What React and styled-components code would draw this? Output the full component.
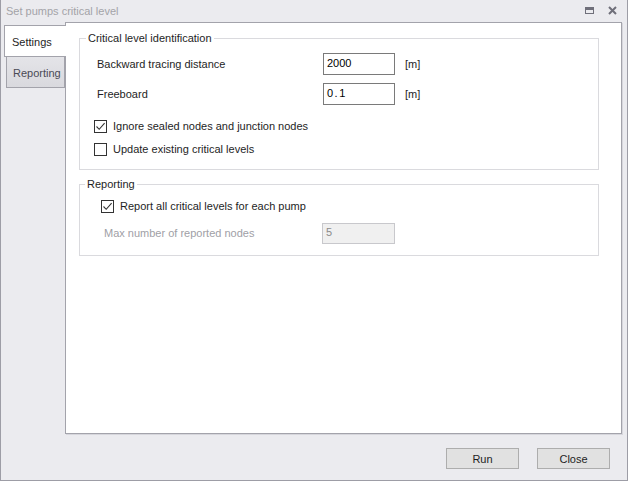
import styled, { createGlobalStyle } from "styled-components";

const GlobalStyle = createGlobalStyle`
    html, body {
        margin: 0;
        padding: 0;
    }
    body {
        font-family: "Liberation Sans", Arial, sans-serif;
        font-size: 11px;
        color: #1e1e1e;
    }
`;

const CheckMark = () => (
    <svg width="11" height="11" viewBox="0 0 11 11">
        <path d="M1.5 5.5 L4.2 8.3 L9.6 2.2" fill="none" stroke="#333" strokeWidth="1.1" />
    </svg>
);

const Checkbox = ({ checked, children }) => (
    <CheckRow>
        <Box>{checked && <CheckMark />}</Box>
        <span>{children}</span>
    </CheckRow>
);

const App = () => {
    return (
        <>
            <GlobalStyle />
            <Window>
                <TitleBar>
                    <span className="title">Set pumps critical level</span>
                    <div className="controls">
                        <MaxIcon />
                        <svg width="9" height="9" viewBox="0 0 9 9">
                            <path d="M1 1 L8 8 M8 1 L1 8" stroke="#6f6f7a" strokeWidth="2" />
                        </svg>
                    </div>
                </TitleBar>
                <Body>
                    <TabStrip>
                        <Tab $active>Settings</Tab>
                        <Tab>Reporting</Tab>
                    </TabStrip>
                    <Panel>
                        <Group>
                            <legend>Critical level identification</legend>
                            <GroupBody $pad="8px 0 12px 17px">
                                <FieldRow $label="216px">
                                    <span>Backward tracing distance</span>
                                    <Input>2000</Input>
                                    <span>[m]</span>
                                </FieldRow>
                                <FieldRow $label="216px">
                                    <span>Freeboard</span>
                                    <Input $spaced>0.1</Input>
                                    <span>[m]</span>
                                </FieldRow>
                                <CheckList $top="13px" $left="-3px">
                                    <Checkbox checked>Ignore sealed nodes and junction nodes</Checkbox>
                                    <Checkbox>Update existing critical levels</Checkbox>
                                </CheckList>
                            </GroupBody>
                        </Group>
                        <Group $second>
                            <legend>Reporting</legend>
                            <GroupBody $pad="7px 0 11px 21px">
                                <CheckList>
                                    <Checkbox checked>Report all critical levels for each pump</Checkbox>
                                </CheckList>
                                <FieldRow $label="208px" $disabled>
                                    <span>Max number of reported nodes</span>
                                    <Input $disabled>5</Input>
                                </FieldRow>
                            </GroupBody>
                        </Group>
                    </Panel>
                </Body>
                <Footer>
                    <Button>Run</Button>
                    <Button>Close</Button>
                </Footer>
            </Window>
        </>
    );
};

const Window = styled.div`
    box-sizing: border-box;
    width: 628px;
    height: 481px;
    background: #ebebef;
    border: 1px solid #9d9da6;
    border-top: none;
    display: flex;
    flex-direction: column;
`;

const TitleBar = styled.div`
    height: 21px;
    display: flex;
    align-items: center;
    justify-content: space-between;
    padding: 0 10px 1px 5px;
    font-size: 11px;

    .title {
        color: #a3a3a8;
    }

    .controls {
        display: flex;
        align-items: center;
        gap: 14px;
    }
`;

const MaxIcon = styled.span`
    box-sizing: border-box;
    width: 9px;
    height: 7px;
    border: 1px solid #6f6f7a;
    border-top-width: 3px;
`;

const Body = styled.div`
    display: flex;
    align-items: flex-start;
    padding-right: 5px;
`;

const TabStrip = styled.div`
    width: 64px;
    padding-top: 3px;
    display: flex;
    flex-direction: column;
    align-items: flex-end;
    flex-shrink: 0;
`;

const Tab = styled.div`
    box-sizing: border-box;
    position: relative;
    z-index: 1;
    width: ${(p) => (p.$active ? "62px" : "59px")};
    height: ${(p) => (p.$active ? "32px" : "31px")};
    margin-right: ${(p) => (p.$active ? "-1px" : "0")};
    padding: ${(p) => (p.$active ? "1px 0 0 7px" : "1px 0 0 6px")};
    display: flex;
    align-items: center;
    background: ${(p) => (p.$active ? "#ffffff" : "linear-gradient(#e4e4e8, #d9d9de)")};
    border: 1px solid #a3a3ab;
    border-right: ${(p) => (p.$active ? "none" : "1px solid #a3a3ab")};
    border-top: ${(p) => (p.$active ? "1px solid #a3a3ab" : "none")};
    color: ${(p) => (p.$active ? "#1e1e1e" : "#4a4a55")};
`;

const Panel = styled.div`
    box-sizing: border-box;
    flex: 1;
    height: 412px;
    background: #ffffff;
    border: 1px solid #a3a3ab;
    box-shadow: 1px 1px 0 #d6d6dc;
    padding: 8px 22px 0 13px;
`;

const Group = styled.fieldset`
    margin: ${(p) => (p.$second ? "7px 0 0" : "0")};
    padding: 0;
    border: 1px solid #dadade;

    legend {
        padding: 0 2px;
        margin-left: ${(p) => (p.$second ? "5px" : "6px")};
        line-height: 14px;
        color: #1e1e1e;
    }
`;

const GroupBody = styled.div`
    padding: ${(p) => p.$pad};
`;

const FieldRow = styled.div`
    display: grid;
    grid-template-columns: ${(p) => p.$label} 72px auto;
    column-gap: 10px;
    align-items: center;
    height: 22px;
    margin-top: ${(p) => (p.$disabled ? "8px" : "0")};
    margin-left: ${(p) => (p.$disabled ? "3px" : "0")};
    margin-bottom: 8px;
    color: ${(p) => (p.$disabled ? "#a0a0a6" : "#1e1e1e")};

    &:last-child {
        margin-bottom: 0;
    }
`;

const Input = styled.div`
    box-sizing: border-box;
    height: ${(p) => (p.$disabled ? "21px" : "22px")};
    width: ${(p) => (p.$disabled ? "73px" : "72px")};
    border: 1px solid ${(p) => (p.$disabled ? "#c8c8cc" : "#7a7a7a")};
    background: ${(p) => (p.$disabled ? "#f0f0f0" : "#ffffff")};
    color: ${(p) => (p.$disabled ? "#8a8a8a" : "#000")};
    padding: 0 3px 2px;
    display: flex;
    align-items: center;
    letter-spacing: ${(p) => (p.$spaced ? "1.5px" : "0")};
`;

const CheckList = styled.div`
    display: flex;
    flex-direction: column;
    gap: 7px;
    margin-top: ${(p) => p.$top || "0"};
    margin-left: ${(p) => p.$left || "0"};
`;

const CheckRow = styled.label`
    display: flex;
    align-items: center;
    gap: 6px;
    height: 16px;
`;

const Box = styled.span`
    box-sizing: border-box;
    width: 13px;
    height: 13px;
    border: 1px solid #333;
    background: #fff;
    display: flex;
    align-items: center;
    justify-content: center;
`;

const Footer = styled.div`
    display: flex;
    justify-content: flex-end;
    gap: 18px;
    padding: 14px 17px 0 0;
`;

const Button = styled.div`
    box-sizing: border-box;
    width: 73px;
    height: 21px;
    border: 1px solid #adadad;
    background: #e1e1e1;
    display: flex;
    align-items: center;
    justify-content: center;
    color: #1e1e1e;
`;

export default App;
